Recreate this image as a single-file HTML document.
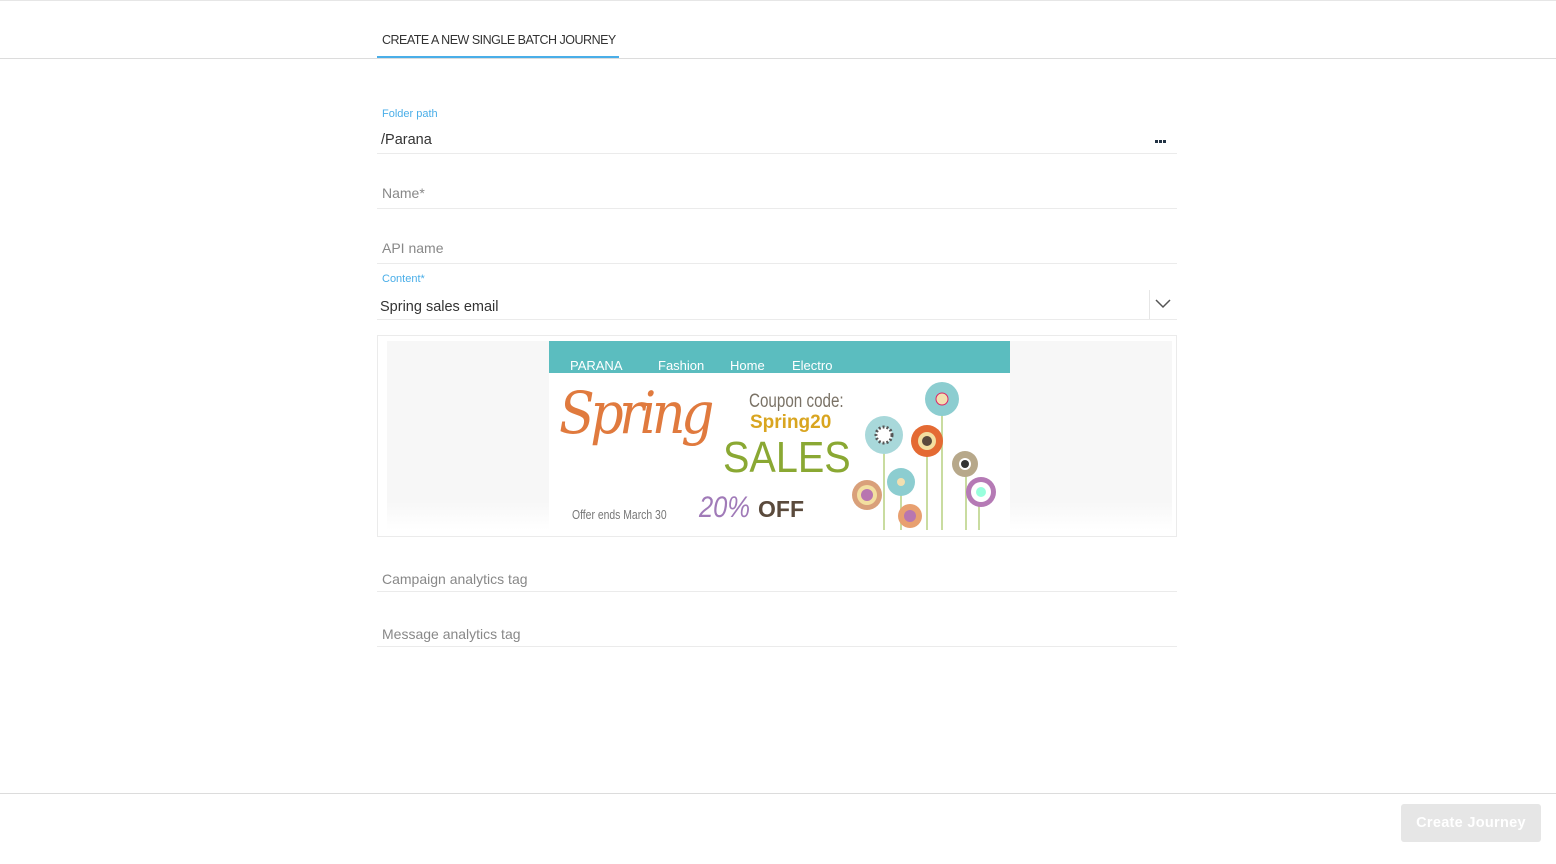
<!DOCTYPE html>
<html><head><style>
*{margin:0;padding:0;box-sizing:border-box}
body{width:1556px;height:864px;background:#fff;font-family:"Liberation Sans","DejaVu Sans",sans-serif;position:relative;overflow:hidden;color:#333}
.a{position:absolute}
.line{position:absolute;left:377px;width:800px;height:1px;background:#ebebeb}
.ph{position:absolute;left:382px;font-size:14px;color:#888}
</style></head><body>
<div class="a" style="left:0;top:0;width:1556px;height:1px;background:#e6e6e6"></div>
<div class="a" style="left:382px;top:33px;font-size:12.5px;color:#333;letter-spacing:-0.5px">CREATE A NEW SINGLE BATCH JOURNEY</div>
<div class="a" style="left:0;top:58px;width:1556px;height:1px;background:#dcdcdc"></div>
<div class="a" style="left:377px;top:56px;width:242px;height:2px;background:#4aaee8"></div>

<div class="a" style="left:382px;top:108px;font-size:11px;color:#4aaee8">Folder path</div>
<div class="a" style="left:381px;top:132px;font-size:14.5px;color:#333">/Parana</div>
<div class="a" style="left:1155px;top:140px;width:12px;height:3px;background:repeating-linear-gradient(90deg,#234 0 3px,transparent 3px 4px)"></div>
<div class="line" style="top:153px"></div>

<div class="ph" style="top:185px">Name*</div>
<div class="line" style="top:208px"></div>
<div class="ph" style="top:240px">API name</div>
<div class="line" style="top:263px"></div>

<div class="a" style="left:382px;top:273px;font-size:11px;color:#4aaee8">Content*</div>
<div class="a" style="left:380px;top:299px;font-size:14.5px;color:#333">Spring sales email</div>
<div class="a" style="left:1149px;top:290px;width:1px;height:29px;background:#e6e6e6"></div>
<svg class="a" style="left:1155px;top:299px" width="16" height="10"><path d="M1 1 L8 8 L15 1" fill="none" stroke="#555" stroke-width="1.5"/></svg>
<div class="line" style="top:319px"></div>

<div class="a" style="left:377px;top:335px;width:800px;height:202px;border:1px solid #ebebeb"></div>
<div class="a" style="left:387px;top:341px;width:785px;height:189px;background:linear-gradient(#f7f7f7 85%,#fff)"></div>
<div class="a" style="left:549px;top:341px;width:461px;height:189px;background:#fff;overflow:hidden">
 <div style="height:32px;background:#5bbdbf;color:#fff;font-size:13px;position:relative">
  <span class="a" style="left:21px;top:17px">PARANA</span><span class="a" style="left:109px;top:17px">Fashion</span><span class="a" style="left:181px;top:17px">Home</span><span class="a" style="left:243px;top:17px">Electro</span>
 </div>
 <div class="a" style="left:10px;top:38px;font-family:'DejaVu Serif',serif;font-style:italic;font-size:58px;color:#e07a3e;letter-spacing:-5px;transform:scaleX(.9);transform-origin:left">Spring</div>
 <div class="a" style="left:200px;top:50px;font-size:19px;color:#7a7266;transform:scaleX(.8);transform-origin:left">Coupon code:</div>
 <div class="a" style="left:201px;top:71px;font-size:19px;font-weight:bold;color:#d9a520">Spring20</div>
 <div class="a" style="left:174px;top:92px;font-size:44px;color:#8aa833;transform:scaleX(.9);transform-origin:left">SALES</div>
 <div class="a" style="left:23px;top:166px;font-size:13px;color:#777;transform:scaleX(.8);transform-origin:left">Offer ends March 30</div>
 <div class="a" style="left:150px;top:150px;font-size:30px;font-style:italic;color:#a07ab8;transform:scaleX(.85);transform-origin:left">20%</div>
 <div class="a" style="left:209px;top:155px;font-size:23px;font-weight:bold;color:#5a4a3c">OFF</div>
 <svg class="a" style="left:300px;top:36px" width="160" height="155">
  <g stroke="#c9dca0" stroke-width="2"><line x1="93" y1="30" x2="93" y2="155"/><line x1="35" y1="60" x2="35" y2="155"/><line x1="78" y1="65" x2="78" y2="155"/><line x1="117" y1="90" x2="117" y2="155"/><line x1="130" y1="120" x2="130" y2="155"/><line x1="52" y1="110" x2="52" y2="155"/></g>
  <circle cx="93" cy="22" r="17" fill="#8ccdd0"/><circle cx="93" cy="22" r="6" fill="#f2dfb0" stroke="#d26" stroke-width="1"/>
  <circle cx="35" cy="58" r="19" fill="#a8d8da"/><circle cx="35" cy="58" r="8" fill="#fff" stroke="#555" stroke-width="3" stroke-dasharray="2 2"/>
  <circle cx="78" cy="64" r="16" fill="#e46a33"/><circle cx="78" cy="64" r="9" fill="#f3dfa0"/><circle cx="78" cy="64" r="5" fill="#5a4a3c"/>
  <circle cx="116" cy="87" r="13" fill="#b7a88a"/><circle cx="116" cy="87" r="6" fill="#fff"/><circle cx="116" cy="87" r="4" fill="#333"/>
  <circle cx="52" cy="105" r="14" fill="#8ccdd0"/><circle cx="52" cy="105" r="4" fill="#f2dfb0"/>
  <circle cx="18" cy="118" r="15" fill="#d9a07a"/><circle cx="18" cy="118" r="10" fill="#f3dfa0"/><circle cx="18" cy="118" r="6" fill="#b876b0"/>
  <circle cx="132" cy="115" r="15" fill="#b57ab5"/><circle cx="132" cy="115" r="10" fill="#fff"/><circle cx="132" cy="115" r="5" fill="#9fd"/>
  <circle cx="61" cy="139" r="12" fill="#e8a070"/><circle cx="61" cy="139" r="6" fill="#b876b0"/>
 </svg>
</div>

<div class="ph" style="top:571px">Campaign analytics tag</div>
<div class="line" style="top:591px"></div>
<div class="ph" style="top:626px">Message analytics tag</div>
<div class="line" style="top:646px"></div>

<div class="a" style="left:0;top:793px;width:1556px;height:1px;background:#dcdcdc"></div>
<div class="a" style="left:1401px;top:804px;width:140px;height:38px;background:#e6e6e6;border-radius:3px;color:#fff;font-weight:bold;font-size:14.5px;text-align:center;line-height:38px;letter-spacing:.3px">Create Journey</div>
</body></html>
